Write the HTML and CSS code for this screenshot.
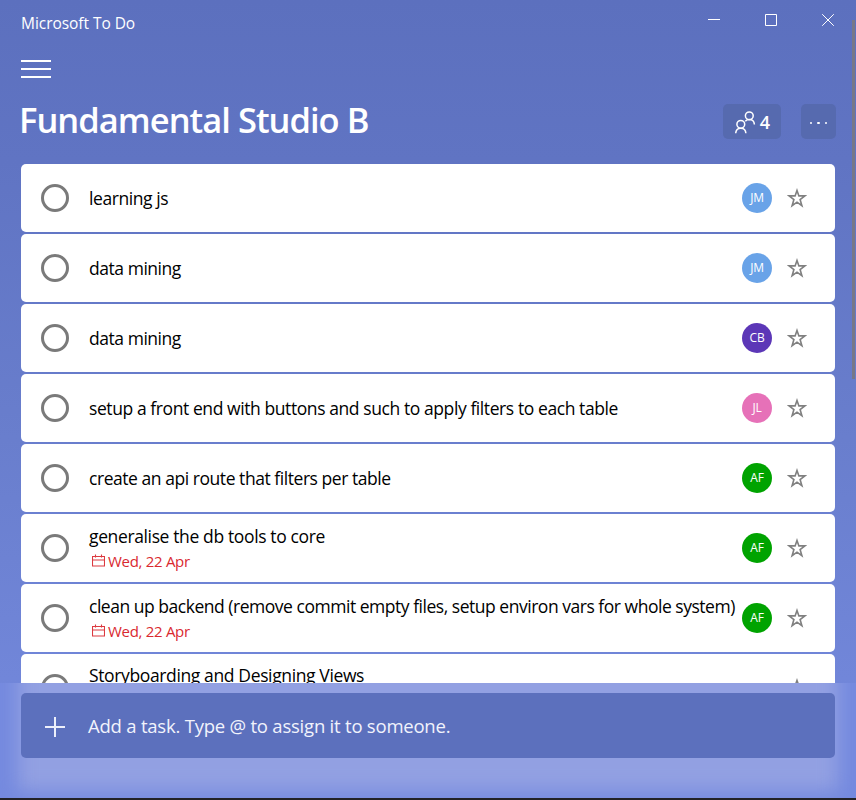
FILE: index.html
```html
<!DOCTYPE html>
<html lang="en">
<head>
<meta charset="utf-8">
<title>Microsoft To Do</title>
<link rel="stylesheet" href="styles.css">
</head>
<body>
<svg class="defs" width="0" height="0" aria-hidden="true">
  <symbol id="star" viewBox="0 0 20 20"><path d="M10 2.400 11.900 7.900H17.900L13.100 11.600 14.900 17.700 10 14.200 5.100 17.700 6.900 11.600 2.100 7.900H8.100Z" fill="none" stroke="#808080" stroke-width="1.600"/></symbol>
  <symbol id="cal" viewBox="0 0 13 13"><path d="M.5 2.500h12v9.500h-12zM.5 6h12M3.500 .5v3M9.500 .5v3" fill="none" stroke="#dc3a40" stroke-width="1.100"/></symbol>
</svg>
<div class="app">
  <header class="titlebar">
    <span class="app-name">Microsoft To Do</span>
    <svg class="controls" width="128" height="14" viewBox="0 0 128 14" fill="none" stroke="#fff" stroke-width="1"><path d="M0 6.500h12"/><path d="M57.500 1.500h11v11h-11z"/><path d="M114.200 1.200l11.600 11.600M125.800 1.200l-11.600 11.600"/></svg>
  </header>
  <div class="menu"><i></i><i></i><i></i></div>
  <div class="heading">
    <h1>Fundamental Studio B</h1>
    <button class="btn share"><svg width="22" height="24" viewBox="0 0 22 24" fill="none" stroke="#fff" stroke-width="1.500"><circle cx="15.300" cy="5.800" r="3.900"/><circle cx="6.800" cy="14.300" r="3.900"/><path d="M1.700 23.200c.2-3 2.200-5 5.100-5s4.900 2 5.100 5M11.300 11.200c1-1.100 2.300-1.600 4-1.600 2.900 0 4.900 1.900 5.100 4.900"/></svg><span>4</span></button>
    <button class="btn more"><i></i><i></i><i></i></button>
  </div>
  <main class="list">
    <div class="task"><i class="check"></i><div class="text"><p class="t1">learning js</p></div><b class="avatar jm">JM</b><svg class="star"><use href="#star"/></svg></div>
    <div class="task"><i class="check"></i><div class="text"><p class="t2">data mining</p></div><b class="avatar jm">JM</b><svg class="star"><use href="#star"/></svg></div>
    <div class="task"><i class="check"></i><div class="text"><p class="t2">data mining</p></div><b class="avatar cb">CB</b><svg class="star"><use href="#star"/></svg></div>
    <div class="task"><i class="check"></i><div class="text"><p class="t3">setup a front end with buttons and such to apply filters to each table</p></div><b class="avatar jl">JL</b><svg class="star"><use href="#star"/></svg></div>
    <div class="task"><i class="check"></i><div class="text"><p class="t4">create an api route that filters per table</p></div><b class="avatar af">AF</b><svg class="star"><use href="#star"/></svg></div>
    <div class="task"><i class="check"></i><div class="text"><p class="t5">generalise the db tools to core</p><div class="due"><svg><use href="#cal"/></svg><span>Wed, 22 Apr</span></div></div><b class="avatar af">AF</b><svg class="star"><use href="#star"/></svg></div>
    <div class="task"><i class="check"></i><div class="text"><p class="t6">clean up backend (remove commit empty files, setup environ vars for whole system)</p><div class="due"><svg><use href="#cal"/></svg><span>Wed, 22 Apr</span></div></div><b class="avatar af">AF</b><svg class="star"><use href="#star"/></svg></div>
    <div class="task last"><i class="check"></i><div class="text"><p class="t7">Storyboarding and Designing Views</p></div><svg class="star"><use href="#star"/></svg></div>
  </main>
  <footer class="dock">
    <div class="add"><svg width="20" height="20" viewBox="0 0 20 20" stroke="#eceffb" stroke-width="2"><path d="M0 10h20M10 0v20"/></svg><span>Add a task. Type @ to assign it to someone.</span></div>
  </footer>
  <div class="scrollbar"></div>
</div>
</body>
</html>
```
FILE: styles.css
```css
* { box-sizing: border-box; }
body { margin: 0; font-family: "Open Sans", "Noto Sans", sans-serif; }
h1, p { margin: 0; font-weight: 400; white-space: nowrap; }
i { display: block; }
.defs { position: absolute; }
.app {
  position: relative;
  display: flex;
  flex-direction: column;
  width: 856px;
  height: 800px;
  overflow: hidden;
  border-bottom: 2px solid #222226;
  background: linear-gradient(#5c70be, #6074c3 20%, #697ecd 55%, #758adf);
}
.titlebar { display: flex; justify-content: space-between; height: 60px; padding: 13px 20px 0 21px; color: #fff; }
.app-name { font-size: 15.500px; line-height: 20px; letter-spacing: -.05px; }
.menu { display: flex; flex-direction: column; gap: 6px; width: 30px; margin-left: 21px; }
.menu i { height: 2px; background: #fff; }
.heading { display: flex; align-items: flex-start; height: 86px; padding: 26px 20px 0 19px; color: #fff; }
h1 { flex: 1; margin-top: -8px; font-size: 34.500px; font-weight: 600; line-height: 48px; letter-spacing: -.98px; }
.btn { display: flex; align-items: center; justify-content: center; height: 35px; padding: 0; border: 0; border-radius: 5px; background: #566aaf; color: #fff; font: 600 18px "Open Sans", sans-serif; }
.share { width: 58px; gap: 4px; }
.more { width: 35px; margin-left: 20px; gap: 5px; padding-top: 3px; }
.more i { width: 2.500px; height: 2.500px; border-radius: 50%; background: #fff; }
.list { display: flex; flex-direction: column; gap: 2px; height: 519px; overflow: hidden; padding: 0 21px; }
.task { display: flex; flex: none; align-items: center; height: 68px; padding: 0 28px 0 20px; border-radius: 5px; background: #fff; }
.check { flex: none; width: 28px; height: 28px; border: 3px solid #7a7a7a; border-radius: 50%; }
.text { flex: 1; min-width: 0; margin-left: 20px; color: #000; font-size: 17.500px; line-height: 25px; }
.t1 { letter-spacing: -.43px; }
.t2 { letter-spacing: -.46px; }
.t3 { letter-spacing: -.415px; }
.t4 { letter-spacing: -.45px; }
.t5 { letter-spacing: -.37px; }
.t6 { letter-spacing: -.475px; }
.t7 { letter-spacing: -.37px; }
.last { align-items: flex-start; padding-top: 20px; }
.last .text { margin-top: -11px; }
.last .star { margin-top: 4px; }
.avatar { flex: none; width: 30px; height: 30px; border-radius: 50%; color: #fff; font-size: 12px; font-weight: 400; line-height: 29px; text-align: center; letter-spacing: -.2px; }
.jm { background: #69a3e8; }
.cb { background: #5c37b7; }
.jl { background: #e671b8; }
.af { background: #00a300; }
.star { flex: none; width: 20px; height: 20px; margin-left: 15px; }
.due { display: flex; align-items: center; height: 24px; padding-left: 3px; color: #d9292f; font-size: 15px; letter-spacing: -.3px; }
.due svg { width: 13px; height: 13px; margin-right: 3px; }
.due span { padding-top: 1px; }
.dock { position: relative; flex: 1; overflow: hidden; padding: 10px 21px 0; background: #758adf; }
.dock::before { content: ""; position: absolute; left: 18px; right: 18px; top: -30px; height: 138px; background: #92a0e2; filter: blur(9px); }
.add { position: relative; display: flex; align-items: center; height: 65px; padding-left: 24px; border-radius: 5px; background: #5c70bd; color: #f1f3fc; font-size: 18.500px; }
.add svg { position: relative; top: 1px; }
.add span { margin-left: 23px; white-space: nowrap; letter-spacing: -.22px; }
.scrollbar { position: absolute; right: 1px; top: 20px; width: 3px; height: 359px; background: #777888; }
```
